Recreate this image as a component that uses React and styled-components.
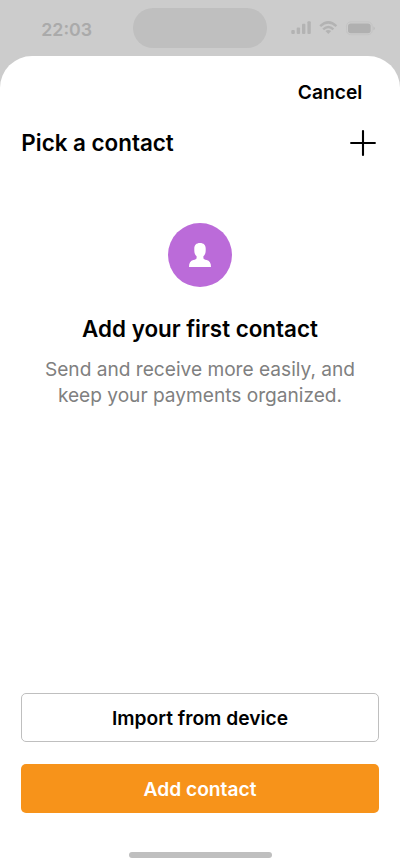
import React from "react";
import styled, { createGlobalStyle } from "styled-components";

const GlobalStyle = createGlobalStyle`
  *, *::before, *::after { box-sizing: border-box; }
  body {
    margin: 0;
    background: #cccccc;
    font-family: Inter, "Liberation Sans", sans-serif;
    color: #000;
  }
  h1, h2, p { margin: 0; }
  button { font-family: inherit; cursor: pointer; }
`;

const Screen = styled.div`
  display: flex;
  flex-direction: column;
  width: 100%;
  height: 100vh;
  min-height: 866px;
  background: #cccccc;
  overflow: hidden;
`;

const StatusBar = styled.header`
  display: grid;
  grid-template-columns: 133.33px 133.33px 133.34px;
  align-items: center;
  height: 56.3px;
  flex: none;
`;

const Time = styled.time`
  text-align: center;
  font-size: 17.8px;
  line-height: 24px;
  font-weight: 600;
  color: #aaaaaa;
  padding-top: 4px;
`;

const Island = styled.div`
  height: 39.5px;
  border-radius: 20px;
  background: #bfbfbf;
`;

const StatusIcons = styled.div`
  padding-left: 23px;
  display: flex;
`;

const Sheet = styled.main`
  flex: 1;
  display: flex;
  flex-direction: column;
  background: #fff;
  border-radius: 32px 32px 0 0;
  padding: 0 21.33px;
`;

const CancelRow = styled.div`
  display: flex;
  justify-content: flex-end;
  padding: 23px 16.4px 0 0;
`;

const CancelButton = styled.button`
  border: 0;
  padding: 0;
  background: none;
  color: #000;
  font-size: 19.2px;
  line-height: 26px;
  font-weight: 600;
`;

const TitleRow = styled.div`
  display: flex;
  justify-content: space-between;
  align-items: center;
  margin-top: 21.7px;
  height: 32px;
`;

const Title = styled.h1`
  font-size: 22.4px;
  line-height: 32px;
  font-weight: 600;
`;

const IconButton = styled.button`
  display: flex;
  border: 0;
  padding: 0;
  background: none;
  margin-right: 2.8px;
`;

const EmptyState = styled.section`
  display: flex;
  flex-direction: column;
  align-items: center;
  margin-top: 64px;
  text-align: center;
`;

const Avatar = styled.div`
  display: flex;
  align-items: center;
  justify-content: center;
  width: 64px;
  height: 64px;
  border-radius: 50%;
  background: #bb6bd9;
`;

const EmptyTitle = styled.h2`
  margin-top: 26px;
  font-size: 22.4px;
  line-height: 32px;
  font-weight: 600;
`;

const EmptyText = styled.p`
  margin-top: 11.4px;
  font-size: 19.13px;
  line-height: 26px;
  color: #808080;
`;

const Actions = styled.footer`
  display: flex;
  flex-direction: column;
  gap: 21.4px;
  margin-top: auto;
`;

const ActionButton = styled.button`
  height: 49px;
  padding: 1px 0 0;
  border-radius: 5px;
  border: ${(p) => (p.$primary ? "0" : "1px solid #bfbfbf")};
  background: ${(p) => (p.$primary ? "#f7931a" : "#fff")};
  color: ${(p) => (p.$primary ? "#fff" : "#000")};
  font-size: 19.2px;
  line-height: 26px;
  font-weight: 600;
`;

const HomeIndicator = styled.div`
  align-self: center;
  width: 143px;
  height: 5.4px;
  border-radius: 3px;
  background: #bfbfbf;
  margin: 39.4px 0 8.4px;
  flex: none;
`;

function SystemIcons() {
  return (
    <svg width="88" height="20" viewBox="290 18 88 20" fill="#b3b3b3">
      <rect x="291.3" y="30" width="3.5" height="4.1" rx="1" />
      <rect x="296.7" y="27.4" width="3.4" height="6.7" rx="1" />
      <rect x="302" y="23.8" width="3.4" height="10.3" rx="1" />
      <rect x="307.4" y="21.2" width="3.4" height="12.9" rx="1" />
      <g fill="none" stroke="#b3b3b3" strokeWidth="2.5">
        <path d="M320.2 26.2Q328.3 18.5 336.4 26.2" />
        <path d="M323.2 29.3Q328.3 24.6 333.4 29.3" />
      </g>
      <path d="M325.4 31Q328.3 28.9 331.2 31L328.3 34.1Z" />
      <rect x="346.5" y="21.9" width="25.7" height="12.8" rx="4.2" fill="none" stroke="#c4c4c4" />
      <rect x="348" y="23.4" width="22.7" height="9.8" rx="2.7" fill="#b0b0b0" />
      <path d="M373.3 26.2Q375 27 375 28.3T373.3 30.4Z" fill="#bfbfbf" />
    </svg>
  );
}

function PlusIcon() {
  return (
    <svg width="26" height="26" viewBox="0 0 26 26" stroke="#000" strokeWidth="2.1" strokeLinecap="round">
      <path d="M13 1.1V24.9M1.1 13H24.9" />
    </svg>
  );
}

function PersonIcon() {
  return (
    <svg width="22" height="24" viewBox="0 0 22 24" fill="#fff">
      <path d="M11 0C7.3 0 5.3 2.2 5.3 5.5V7.5C5.3 10.2 6.1 12 7.6 13.2V15.2C7.4 16.1 6.4 16.5 4.4 16.9C1.5 17.7 0 19.8 0 24H22C22 19.8 20.5 17.7 17.6 16.9C15.6 16.5 14.6 16.1 14.4 15.2V13.2C15.9 12 16.7 10.2 16.7 7.5V5.5C16.7 2.2 14.7 0 11 0Z" />
    </svg>
  );
}

export default function App() {
  return (
    <>
      <GlobalStyle />
      <Screen>
        <StatusBar>
          <Time>22:03</Time>
          <Island />
          <StatusIcons>
            <SystemIcons />
          </StatusIcons>
        </StatusBar>
        <Sheet>
          <CancelRow>
            <CancelButton>Cancel</CancelButton>
          </CancelRow>
          <TitleRow>
            <Title>Pick a contact</Title>
            <IconButton aria-label="Add contact">
              <PlusIcon />
            </IconButton>
          </TitleRow>
          <EmptyState>
            <Avatar>
              <PersonIcon />
            </Avatar>
            <EmptyTitle>Add your first contact</EmptyTitle>
            <EmptyText>
              Send and receive more easily, and
              <br />
              keep your payments organized.
            </EmptyText>
          </EmptyState>
          <Actions>
            <ActionButton>Import from device</ActionButton>
            <ActionButton $primary>Add contact</ActionButton>
          </Actions>
          <HomeIndicator />
        </Sheet>
      </Screen>
    </>
  );
}
